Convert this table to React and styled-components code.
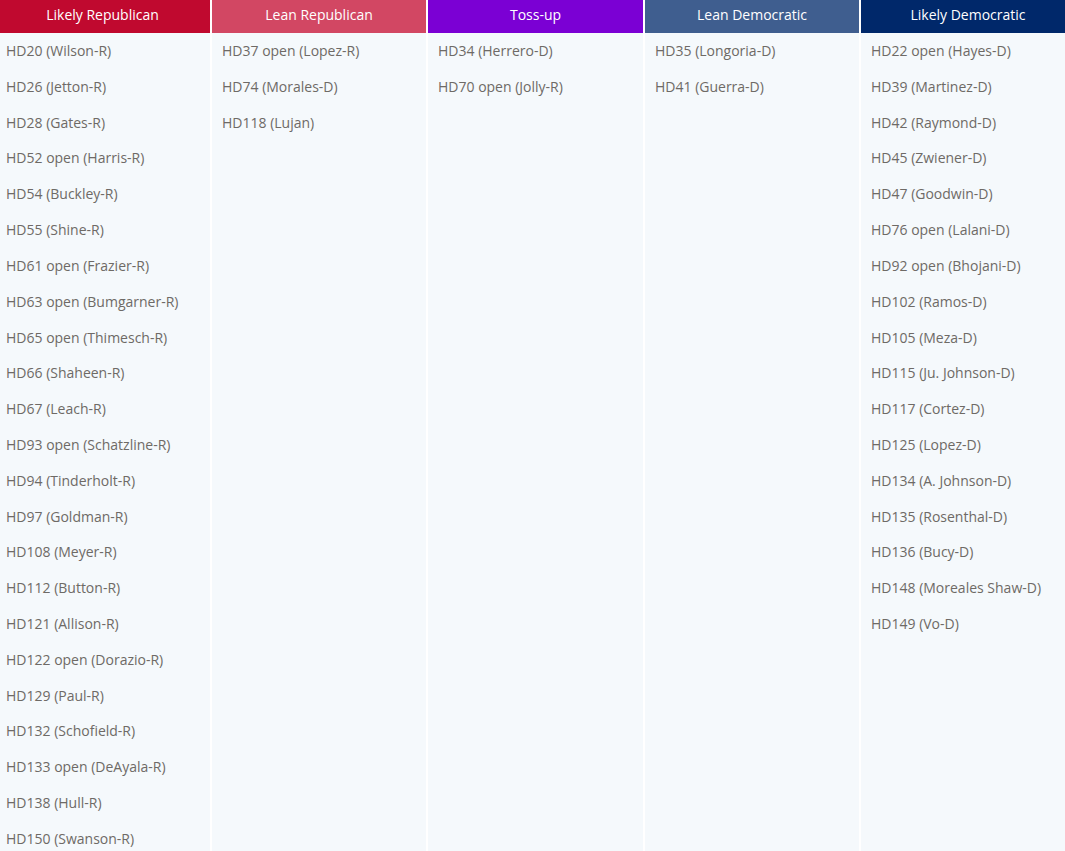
import React from "react";
import styled, { createGlobalStyle } from "styled-components";

const GlobalStyle = createGlobalStyle`
  html, body {
    margin: 0;
    padding: 0;
    background: #ffffff;
  }
  body {
    font-family: "Open Sans", "Liberation Sans", sans-serif;
  }
`

// the board is wider than the window: first column is clipped on the left, last on the right
const Board = styled.div`
  display: grid;
  grid-template-columns: 210px 214px 215px 214px 1fr;
  column-gap: 2px;
  width: 1065px;
  height: 851px;
  overflow: hidden;
`

const Column = styled.div`
  display: flex;
  flex-direction: column;
  background-color: #f5f9fc;
`

const Header = styled.div`
  height: 33px;
  box-sizing: border-box;
  display: flex;
  align-items: center;
  justify-content: center;
  padding: 0 ${(p) => p.$padRight}px 5px ${(p) => p.$padLeft}px;
  background-color: ${(p) => p.$color};
  color: #ffffff;
  font-size: 14px;
  white-space: nowrap;
`

const List = styled.ul`
  list-style: none;
  margin: 0;
  padding: 0;
`

const Race = styled.li`
  height: 35.82px;
  line-height: 35.82px;
  padding-left: ${(p) => (p.$first ? "6px" : "10px")};
  font-size: 14px;
  color: #6e6a66;
  white-space: nowrap;
`

const columns = [
  {
    title: "Likely Republican",
    color: "#c0092f",
    races: [
      "HD20 (Wilson-R)",
      "HD26 (Jetton-R)",
      "HD28 (Gates-R)",
      "HD52 open (Harris-R)",
      "HD54 (Buckley-R)",
      "HD55 (Shine-R)",
      "HD61 open (Frazier-R)",
      "HD63 open (Bumgarner-R)",
      "HD65 open (Thimesch-R)",
      "HD66 (Shaheen-R)",
      "HD67 (Leach-R)",
      "HD93 open (Schatzline-R)",
      "HD94 (Tinderholt-R)",
      "HD97 (Goldman-R)",
      "HD108 (Meyer-R)",
      "HD112 (Button-R)",
      "HD121 (Allison-R)",
      "HD122 open (Dorazio-R)",
      "HD129 (Paul-R)",
      "HD132 (Schofield-R)",
      "HD133 open (DeAyala-R)",
      "HD138 (Hull-R)",
      "HD150 (Swanson-R)",
    ],
  },
  {
    title: "Lean Republican",
    color: "#d24763",
    races: ["HD37 open (Lopez-R)", "HD74 (Morales-D)", "HD118 (Lujan)"],
  },
  {
    title: "Toss-up",
    color: "#7b00d4",
    races: ["HD34 (Herrero-D)", "HD70 open (Jolly-R)"],
  },
  {
    title: "Lean Democratic",
    color: "#3f5e8f",
    races: ["HD35 (Longoria-D)", "HD41 (Guerra-D)"],
  },
  {
    title: "Likely Democratic",
    color: "#00286a",
    races: [
      "HD22 open (Hayes-D)",
      "HD39 (Martinez-D)",
      "HD42 (Raymond-D)",
      "HD45 (Zwiener-D)",
      "HD47 (Goodwin-D)",
      "HD76 open (Lalani-D)",
      "HD92 open (Bhojani-D)",
      "HD102 (Ramos-D)",
      "HD105 (Meza-D)",
      "HD115 (Ju. Johnson-D)",
      "HD117 (Cortez-D)",
      "HD125 (Lopez-D)",
      "HD134 (A. Johnson-D)",
      "HD135 (Rosenthal-D)",
      "HD136 (Bucy-D)",
      "HD148 (Moreales Shaw-D)",
      "HD149 (Vo-D)",
    ],
  },
];

const App = () => {
  const last = columns.length - 1;
  return (
    <>
      <GlobalStyle />
      <Board>
        {columns.map((col, i) => (
          <Column key={col.title}>
            <Header
              $color={col.color}
              $padLeft={i === last ? 10 : 0}
              $padRight={i === 0 ? 5 : 0}
            >
              {col.title}
            </Header>
            <List>
              {col.races.map((race) => (
                <Race key={race} $first={i === 0}>{race}</Race>
              ))}
            </List>
          </Column>
        ))}
      </Board>
    </>
  );
};

export default App;
